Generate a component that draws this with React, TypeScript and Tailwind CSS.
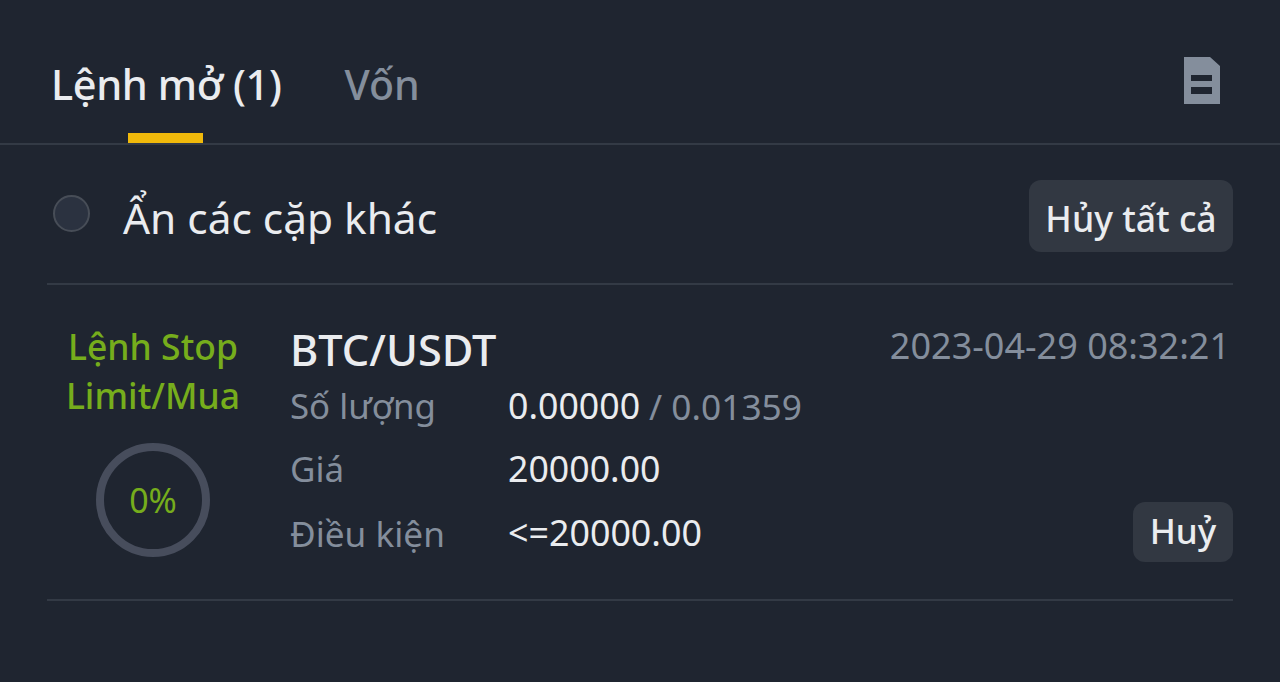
export default function App() {
  return (
    <div className="w-[1280px] h-[682px] overflow-hidden bg-[#1f2530] font-['Noto_Sans','Inter',sans-serif]">
      <div className="h-[145px] border-b-2 border-[#333a45] flex items-start pl-[51px] pr-[59px]">
        <div className="relative h-[143px] pt-[59px]">
          <span className="block text-[41.5px] leading-[50px] font-medium text-[#eaecef] tracking-[-0.4px] whitespace-nowrap">Lệnh mở (1)</span>
          <div className="absolute left-[77px] bottom-0 w-[75px] h-[10px] bg-[#f0b90b]" />
        </div>
        <span className="ml-[63px] mt-[59px] text-[41px] leading-[50px] font-medium text-[#848e9c]">Vốn</span>
        <svg className="ml-auto mt-[57px]" width="38" height="48" viewBox="0 0 38 48">
          <path fillRule="evenodd" fill="#848e9c" d="M1 0H27L37 9V47H1ZM8 18V24H29V18ZM8 30V37H29V30Z" />
        </svg>
      </div>
      <div className="mx-[47px] h-[140px] border-b-2 border-[#333a45] flex items-center">
        <div className="ml-[6px] mt-[-1px] w-[37px] h-[37px] rounded-full bg-[#2b3240] border-2 border-[#474d57]" />
        <span className="ml-[33px] mt-[8px] text-[42.4px] leading-[52px] text-[#eaecef]">Ẩn các cặp khác</span>
        <button className="ml-auto mt-[3px] w-[204px] h-[72px] rounded-[12px] bg-[#323842] text-[35.5px] leading-[44px] font-medium text-[#eaecef]"><span className="relative top-[2px]">Hủy tất cả</span></button>
      </div>
      <div className="mx-[47px] h-[316px] border-b-2 border-[#333a45] flex pt-[37px]">
        <div className="w-[212px] flex flex-col items-center">
          <div className="text-[35.5px] leading-[49px] font-medium text-[#76ad1c] text-center whitespace-nowrap">Lệnh Stop<br />Limit/Mua</div>
          <div className="mt-[23px] w-[114px] h-[114px] rounded-full border-[8px] border-[#474d5c] flex items-center justify-center text-[34px] text-[#76ad1c]">0%</div>
        </div>
        <div className="ml-[31px] flex-1 flex flex-col">
          <div className="flex items-start justify-between pr-[3px]">
            <span className="text-[43.3px] leading-[56px] font-medium text-[#eaecef]">BTC/USDT</span>
            <span className="text-[36px] leading-[48px] text-[#848e9c]">2023-04-29 08:32:21</span>
          </div>
          <div className="flex items-center h-[60px] -mt-[2px]">
            <span className="w-[218px] text-[34.8px] text-[#848e9c]">Số lượng</span>
            <span className="text-[35.7px] text-[#eaecef]">0.00000</span>
            <span className="ml-[9px] text-[35.3px] text-[#848e9c]">/ 0.01359</span>
          </div>
          <div className="flex items-center h-[66px]">
            <span className="w-[218px] text-[35px] text-[#848e9c]">Giá</span>
            <span className="text-[35.7px] text-[#eaecef]">20000.00</span>
          </div>
          <div className="flex items-center h-[62px]">
            <span className="w-[218px] text-[35.2px] text-[#848e9c]">Điều kiện</span>
            <span className="text-[35.8px] text-[#eaecef]">&lt;=20000.00</span>
            <button className="ml-auto -mt-[3px] w-[100px] h-[60px] rounded-[12px] bg-[#323842] text-[35px] font-medium text-[#eaecef]">Huỷ</button>
          </div>
        </div>
      </div>
    </div>
  );
}
